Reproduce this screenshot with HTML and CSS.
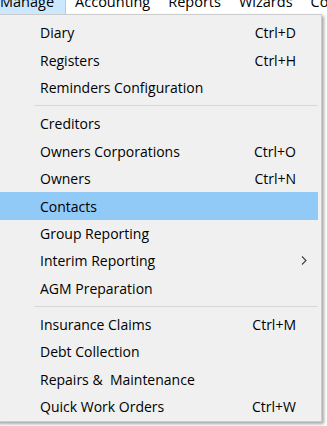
FILE: index.html
```html
<!DOCTYPE html>
<html>
<head>
<meta charset="utf-8">
<link rel="stylesheet" href="styles.css">
</head>
<body>
<div class="menubar">
  <span class="top active">Manage</span>
  <span class="top">Accounting</span>
  <span class="top">Reports</span>
  <span class="top">Wizards</span>
  <span class="top">Communications</span>
</div>
<div class="menu">
  <div class="item"><span class="label">Diary</span><span class="key">Ctrl+D</span></div>
  <div class="item"><span class="label">Registers</span><span class="key">Ctrl+H</span></div>
  <div class="item"><span class="label">Reminders Configuration</span></div>
  <div class="sep"></div>
  <div class="item"><span class="label">Creditors</span></div>
  <div class="item"><span class="label">Owners Corporations</span><span class="key">Ctrl+O</span></div>
  <div class="item"><span class="label">Owners</span><span class="key">Ctrl+N</span></div>
  <div class="item hover"><span class="label">Contacts</span></div>
  <div class="item"><span class="label">Group Reporting</span></div>
  <div class="item"><span class="label">Interim Reporting</span><svg class="arrow" width="6" height="9" viewBox="0 0 6 9"><path d="M1 0.5 L5 4.5 L1 8.5" fill="none" stroke="#404040" stroke-width="1.1"/></svg></div>
  <div class="item"><span class="label">AGM Preparation</span></div>
  <div class="sep"></div>
  <div class="item"><span class="label">Insurance Claims</span><span class="key">Ctrl+M</span></div>
  <div class="item"><span class="label">Debt Collection</span></div>
  <div class="item"><span class="label">Repairs &amp;&nbsp; Maintenance</span></div>
  <div class="item"><span class="label">Quick Work Orders</span><span class="key">Ctrl+W</span></div>
</div>
</body>
</html>
```
FILE: styles.css
```css
html, body {
  margin: 0;
  padding: 0;
}
body {
  background: #ffffff;
  font-family: "Open Sans", "Noto Sans", sans-serif;
  font-size: 14px;
  color: #000000;
  width: 327px;
  height: 426px;
  overflow: hidden;
}
.menubar {
  height: 14px;
  display: flex;
  align-items: flex-end;
  overflow: hidden;
  white-space: nowrap;
  background: #ffffff;
  font-size: 14.5px;
}
.top {
  line-height: 20px;
  padding: 0 8px 2px;
  border: 1px solid transparent;
  border-top: 0;
  border-bottom: 0;
}
.top.active {
  background: #cce8ff;
  border-color: #99d1ff;
  margin-left: -9px;
  padding-right: 11px;
}
.menu {
  margin-left: -4px;
  width: 324px;
  border: 1px solid #cccccc;
  background: #f0f0f0;
  padding: 4px 0 1px;
  box-shadow: 2px 2px 3px rgba(0, 0, 0, 0.35);
}
.item {
  display: flex;
  align-items: center;
  height: 27.4px;
  margin: 0 3px 0 2px;
  padding: 0 22px 0 41px;
  white-space: nowrap;
}
.item.hover {
  background: #91c9f7;
}
.label {
  flex: 1;
}
.key {
  text-align: right;
}
.arrow {
  margin-right: -11px;
}
.sep {
  height: 1px;
  background: #d7d7d7;
  margin: 4px 3px 4px 37px;
}
```
